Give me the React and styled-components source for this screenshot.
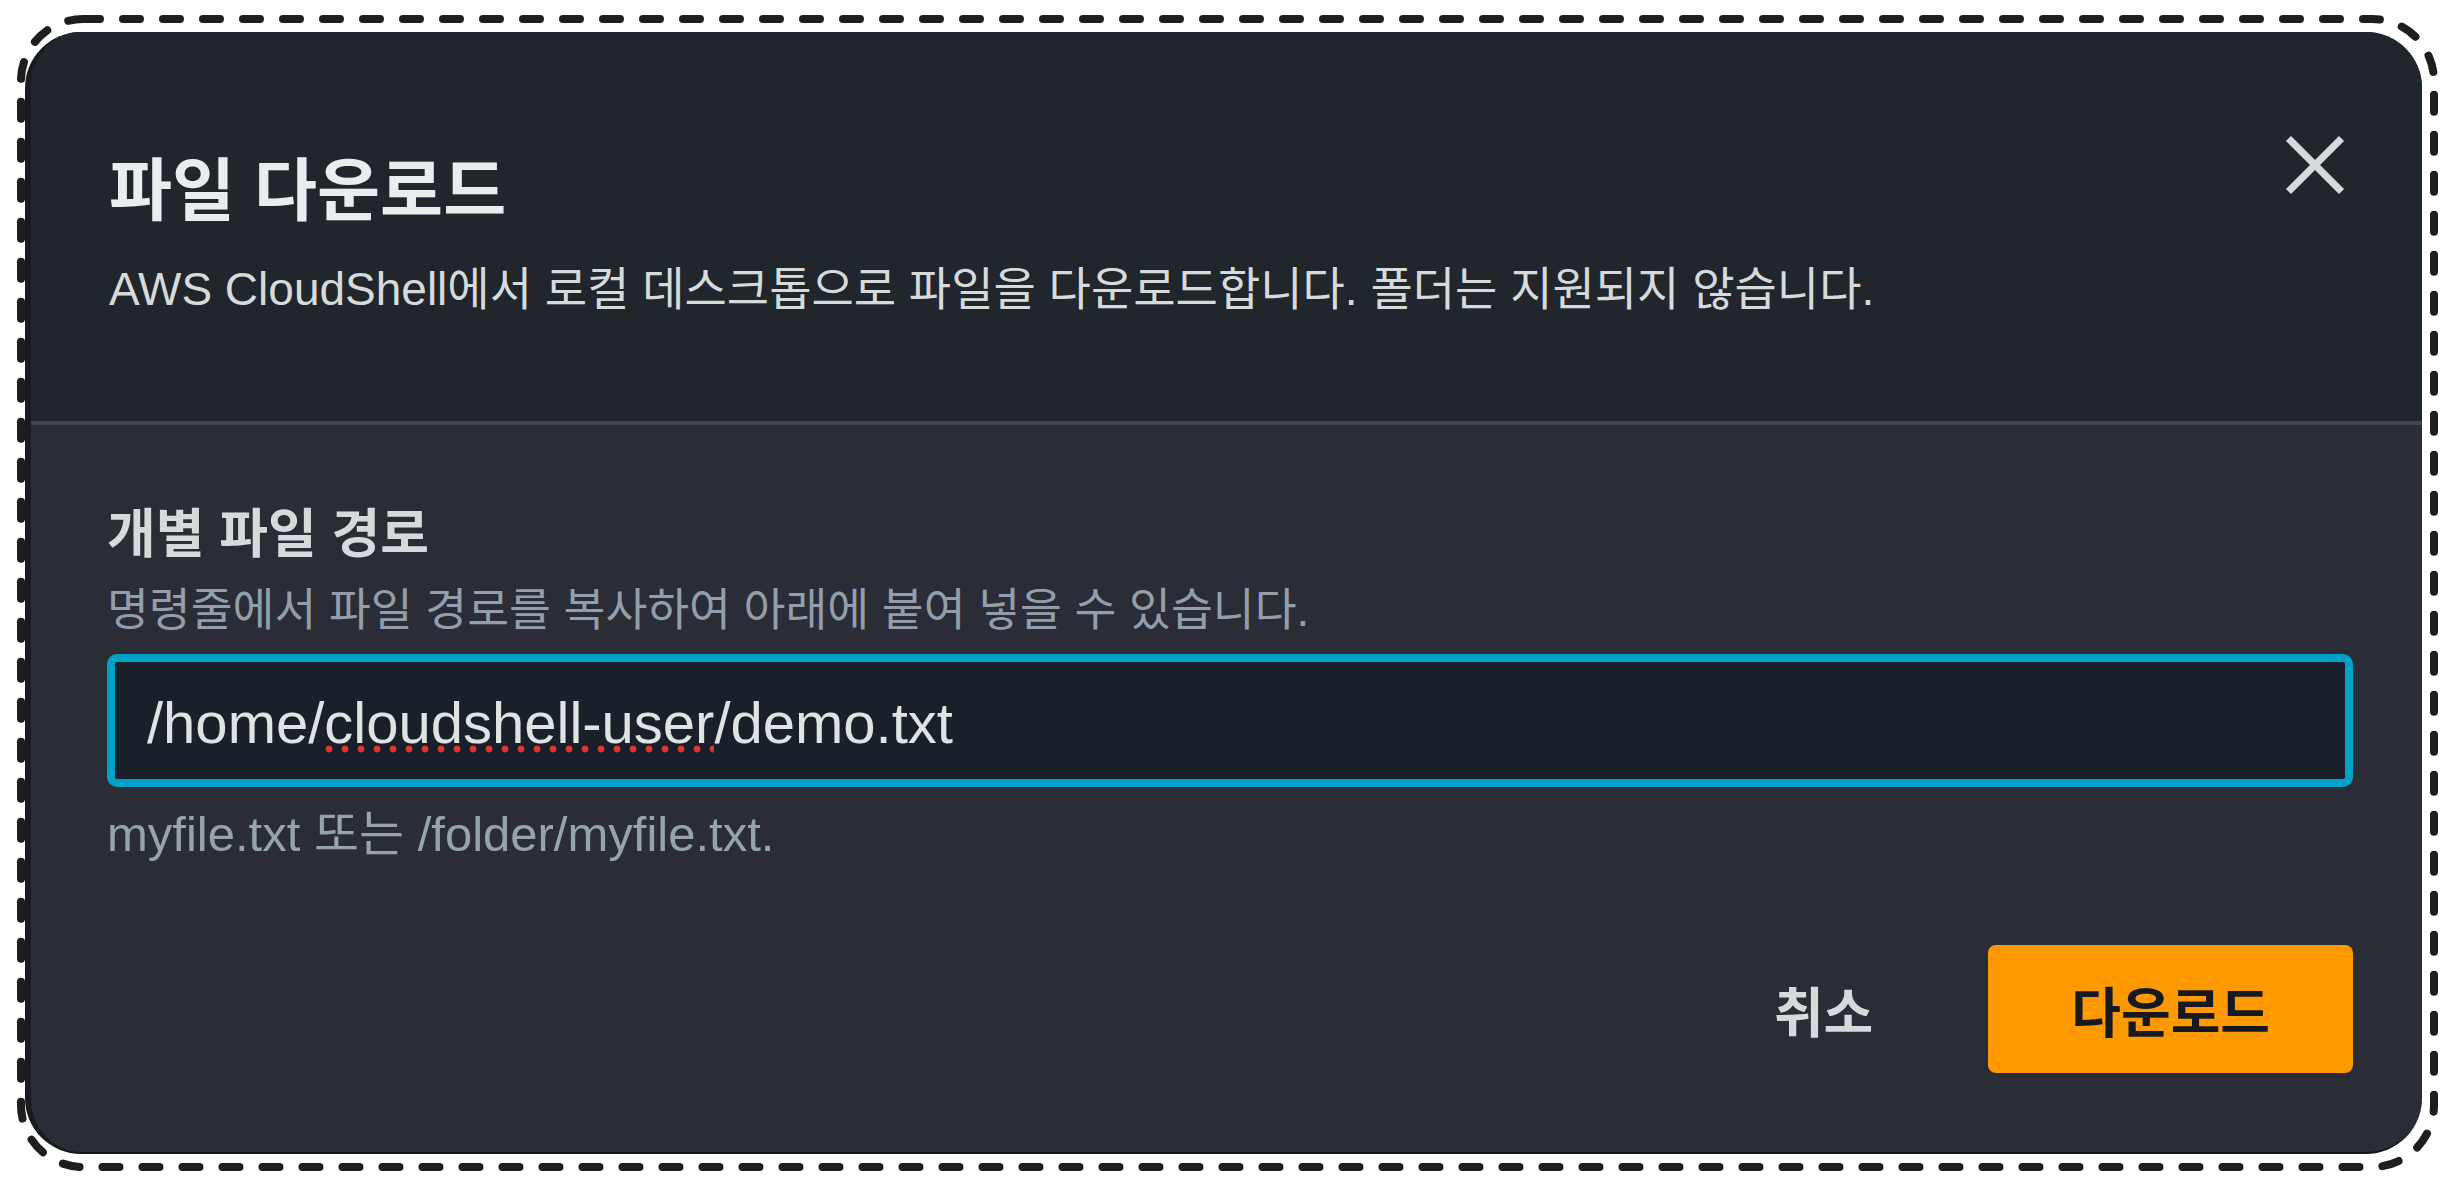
import React from "react";
import styled, { createGlobalStyle } from "styled-components";

const GlobalStyle = createGlobalStyle`
  html, body {
    margin: 0;
    padding: 0;
    background: #ffffff;
    overflow: hidden;
  }
  body {
    font-family: "Liberation Sans", "Noto Sans CJK KR", sans-serif;
  }
  *, *::before, *::after {
    box-sizing: border-box;
  }
`;

const Frame = styled.div`
  position: relative;
  width: 100vw;
  height: 100vh;
  padding: 32px 32px 33px 25px;
  display: flex;
`;

const DashedOutline = styled.svg`
  position: absolute;
  left: 0;
  top: 0;
  width: 100%;
  height: 100%;
  pointer-events: none;
  overflow: visible;
`;

const Dialog = styled.section`
  flex: 1;
  display: flex;
  flex-direction: column;
  border-radius: 56px;
  overflow: hidden;
  background: #2a2d35;
  border-left: 6px solid #181b20;
  border-bottom: 2px solid #15171b;
`;

const Header = styled.header`
  display: flex;
  flex-direction: column;
  background: #21252c;
  padding: 114px 75px 102px 78px;
  border-bottom: 4px solid #414750;
`;

const TitleRow = styled.div`
  display: flex;
  justify-content: space-between;
  align-items: flex-start;
`;

const Title = styled.h2`
  margin: 0;
  font-size: 68.5px;
  line-height: 92px;
  font-weight: 700;
  color: #eaeded;
`;

const CloseButton = styled.button`
  margin: -13px 0 0;
  padding: 0;
  width: 64px;
  height: 64px;
  border: none;
  background: transparent;
  color: #d5dbdb;
  display: flex;
  align-items: center;
  justify-content: center;
  cursor: pointer;
`;

const Subtitle = styled.p`
  margin: 21px 0 0;
  font-size: 46px;
  line-height: 60px;
  color: #d5dbdb;
`;

const Body = styled.div`
  flex: 1;
  display: flex;
  flex-direction: column;
  padding: 75px 69px 79px 76px;
`;

const Label = styled.label`
  font-size: 53px;
  line-height: 70px;
  font-weight: 600;
  color: #d5dbdb;
`;

const Description = styled.div`
  margin-top: 12px;
  font-size: 45.5px;
  line-height: 58px;
  color: #929fab;
`;

const InputBox = styled.div`
  margin-top: 14px;
  height: 133px;
  border: 8px solid #00a1c9;
  border-radius: 10px;
  background: #1a2029;
  padding: 4px 32px 0;
  font-size: 58px;
  line-height: 113px;
  color: #dfe3e4;
  white-space: nowrap;
`;

const Misspelled = styled.span`
  background-image: radial-gradient(circle, #d8352c 3.2px, transparent 3.8px);
  background-size: 16px 8px;
  background-repeat: repeat-x;
  background-position: -3px calc(100% - 2px);
`;

const Hint = styled.div`
  margin-top: 14px;
  font-size: 49px;
  line-height: 67px;
  color: #95a5a6;
`;

const Footer = styled.div`
  margin-top: auto;
  display: flex;
  justify-content: flex-end;
  gap: 32px;
`;

const Button = styled.button`
  height: 128px;
  padding: 0 83px;
  border: none;
  border-radius: 8px;
  font-family: inherit;
  font-size: 54px;
  font-weight: 700;
  display: flex;
  align-items: center;
  justify-content: center;
  cursor: pointer;
  background: ${(p) => (p.$primary ? "#ff9900" : "transparent")};
  color: ${(p) => (p.$primary ? "#16191f" : "#d5dbdb")};
`;

function CloseIcon() {
  return (
    <svg width="64" height="64" viewBox="0 0 16 16" fill="none">
      <path
        d="M2 2 L14 14 M14 2 L2 14"
        stroke="currentColor"
        strokeWidth="1.8"
        strokeLinecap="square"
      />
    </svg>
  );
}

export default function App() {
  return (
    <>
      <GlobalStyle />
      <Frame>
        <DashedOutline>
          <rect
            x="21"
            y="19"
            width="2413"
            height="1148"
            rx="62"
            fill="none"
            stroke="#1e1e1e"
            strokeWidth="8"
            strokeDasharray="17 23"
            strokeLinecap="round"
          />
        </DashedOutline>
        <Dialog>
          <Header>
            <TitleRow>
              <Title>파일 다운로드</Title>
              <CloseButton aria-label="닫기">
                <CloseIcon />
              </CloseButton>
            </TitleRow>
            <Subtitle>
              AWS CloudShell에서 로컬 데스크톱으로 파일을 다운로드합니다. 폴더는 지원되지 않습니다.
            </Subtitle>
          </Header>
          <Body>
            <Label>개별 파일 경로</Label>
            <Description>
              명령줄에서 파일 경로를 복사하여 아래에 붙여 넣을 수 있습니다.
            </Description>
            <InputBox>
              /home/<Misspelled>cloudshell-user</Misspelled>/demo.txt
            </InputBox>
            <Hint>myfile.txt 또는 /folder/myfile.txt.</Hint>
            <Footer>
              <Button>취소</Button>
              <Button $primary>다운로드</Button>
            </Footer>
          </Body>
        </Dialog>
      </Frame>
    </>
  );
}
